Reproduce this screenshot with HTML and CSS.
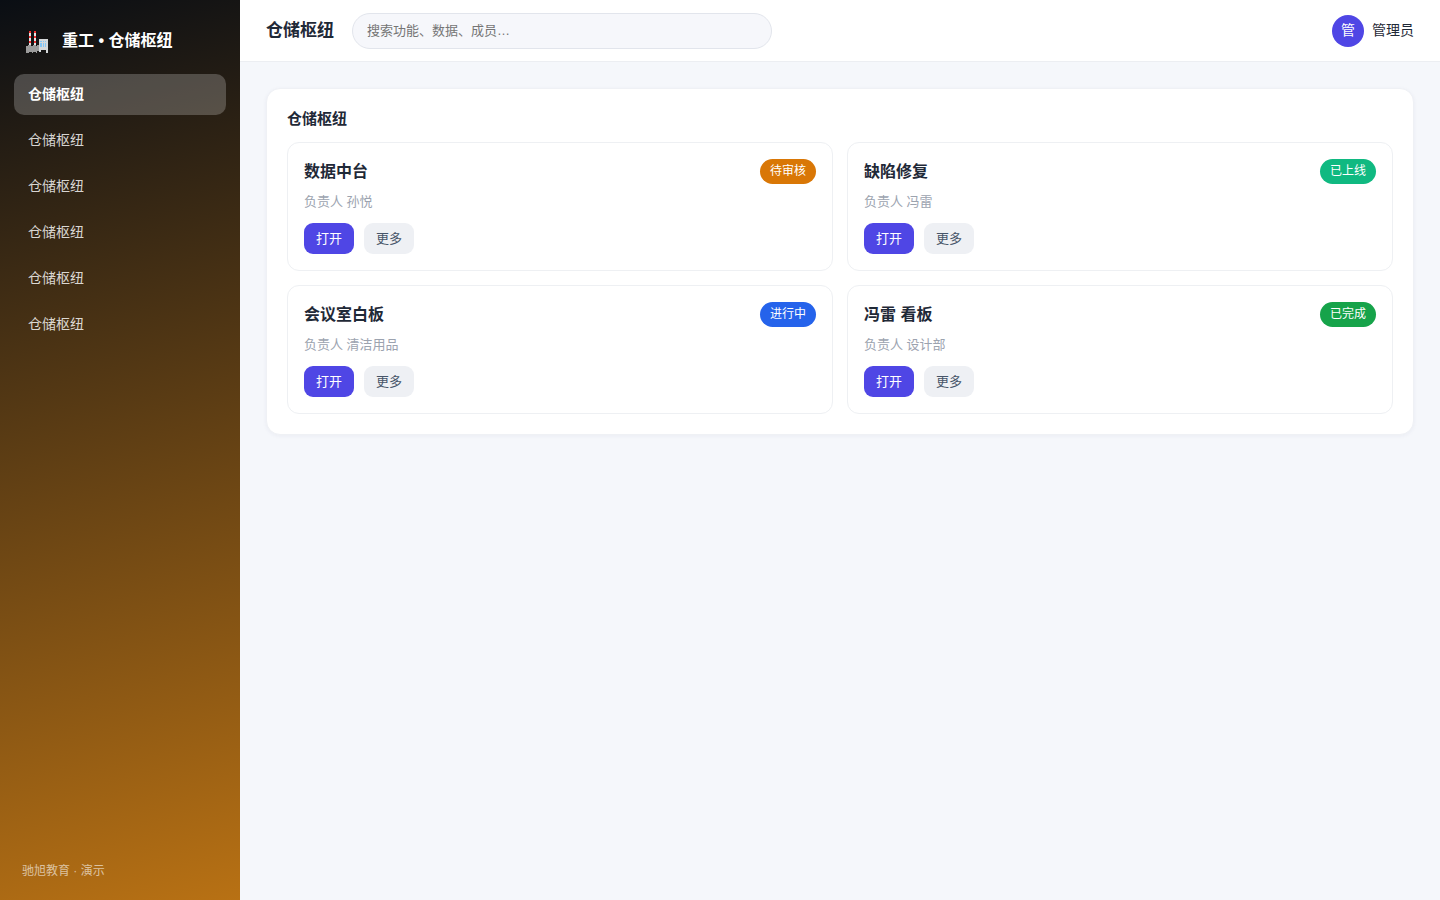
FILE: index.html
```html
<!DOCTYPE html>
<html lang="zh-CN">
<head>
    <meta charset="UTF-8">
    <meta name="viewport" content="width=device-width, initial-scale=1.0">
    <title>重工 • 仓储枢纽</title>
    <link rel="stylesheet" href="styles.css">
</head>
<body>
    <div class="app">
        <aside class="sidebar">
            <div class="brand">
                <svg class="brand-icon" viewBox="0 -4 22 26" shape-rendering="crispEdges" aria-hidden="true">
                    <path fill="#e4e4e4" d="M3 0h2v15H3zM8 0h2v15H8z"/>
                    <path fill="#f03030" d="M3 0h2v2H3zM3 5h2v2H3zM3 10h2v2H3zM8 0h2v2H8zM8 5h2v2H8zM8 10h2v2H8z"/>
                    <path fill="#9b9b9b" d="M0 15h2v-1h3v1h2v-1h3v1h1v-1h2v6h-2v2h-1v-1H7v1H6v-1H3v1H0z"/>
                    <path fill="#d5d8da" d="M13 8h9v14h-2v-3h-5v2h-2z"/>
                    <path fill="#83c5f5" d="M14 10h2v1h-2zM17 10h1v1h-1zM19 10h1v1h-1zM14 12h2v4h-2zM17 12h1v4h-1zM19 12h1v4h-1z"/>
                </svg>
                <span>重工 • 仓储枢纽</span>
            </div>
            <nav class="menu">
                <a class="menu-item active" href="#">仓储枢纽</a>
                <a class="menu-item" href="#">仓储枢纽</a>
                <a class="menu-item" href="#">仓储枢纽</a>
                <a class="menu-item" href="#">仓储枢纽</a>
                <a class="menu-item" href="#">仓储枢纽</a>
                <a class="menu-item" href="#">仓储枢纽</a>
            </nav>
            <div class="sidebar-footer">驰旭教育 · 演示</div>
        </aside>

        <div class="main">
            <header class="topbar">
                <h1>仓储枢纽</h1>
                <input class="search" type="search" placeholder="搜索功能、数据、成员…" aria-label="搜索">
                <div class="user">
                    <span class="avatar">管</span>
                    <span>管理员</span>
                </div>
            </header>

            <main class="content">
                <section class="panel">
                    <h2>仓储枢纽</h2>
                    <div class="cards">
                        <article class="card">
                            <div class="card-head">
                                <h3>数据中台</h3>
                                <span class="badge pending">待审核</span>
                            </div>
                            <p class="owner">负责人 孙悦</p>
                            <div class="actions">
                                <button class="btn primary" type="button">打开</button>
                                <button class="btn" type="button">更多</button>
                            </div>
                        </article>
                        <article class="card">
                            <div class="card-head">
                                <h3>缺陷修复</h3>
                                <span class="badge online">已上线</span>
                            </div>
                            <p class="owner">负责人 冯雷</p>
                            <div class="actions">
                                <button class="btn primary" type="button">打开</button>
                                <button class="btn" type="button">更多</button>
                            </div>
                        </article>
                        <article class="card">
                            <div class="card-head">
                                <h3>会议室白板</h3>
                                <span class="badge running">进行中</span>
                            </div>
                            <p class="owner">负责人 清洁用品</p>
                            <div class="actions">
                                <button class="btn primary" type="button">打开</button>
                                <button class="btn" type="button">更多</button>
                            </div>
                        </article>
                        <article class="card">
                            <div class="card-head">
                                <h3>冯雷 看板</h3>
                                <span class="badge done">已完成</span>
                            </div>
                            <p class="owner">负责人 设计部</p>
                            <div class="actions">
                                <button class="btn primary" type="button">打开</button>
                                <button class="btn" type="button">更多</button>
                            </div>
                        </article>
                    </div>
                </section>
            </main>
        </div>
    </div>
</body>
</html>
```
FILE: styles.css
```css
* {
    box-sizing: border-box;
}
body {
    margin: 0;
    font-family: "Liberation Sans", "Noto Sans CJK SC", sans-serif;
    font-size: 14px;
    line-height: 21px;
    color: #1f2937;
    background-color: #f5f7fb;
}
h1, h2, h3, p {
    margin: 0;
}
.app {
    display: flex;
    min-height: 100vh;
}

/* Sidebar */
.sidebar {
    width: 240px;
    flex-shrink: 0;
    display: flex;
    flex-direction: column;
    padding: 20px 14px 18px;
    color: white;
    background: linear-gradient(165deg, #0a0e14, #b87114);
}
.brand {
    display: flex;
    align-items: center;
    gap: 14px;
    height: 40px;
    padding: 0 12px;
    margin-bottom: 14px;
    font-size: 16px;
    font-weight: bold;
}
.brand-icon {
    width: 22px;
    height: 26px;
}
.menu {
    display: flex;
    flex-direction: column;
    gap: 5px;
}
.menu-item {
    padding: 10px 14px;
    border-radius: 10px;
    color: rgba(255, 255, 255, 0.82);
    text-decoration: none;
}
.menu-item.active {
    background-color: rgba(255, 255, 255, 0.22);
    color: white;
    font-weight: bold;
}
.sidebar-footer {
    margin-top: auto;
    padding: 0 8px;
    font-size: 12px;
    color: rgba(255, 255, 255, 0.6);
}

/* Top bar */
.main {
    flex: 1;
    min-width: 0;
}
.topbar {
    display: flex;
    align-items: center;
    gap: 18px;
    height: 62px;
    padding: 0 26px;
    background-color: white;
    border-bottom: 1px solid #eceef2;
}
.topbar h1 {
    font-size: 17px;
}
.search {
    width: 420px;
    height: 36px;
    padding: 0 14px;
    border: 1px solid #e2e5ec;
    border-radius: 18px;
    background-color: #f6f7fb;
    font-family: inherit;
    font-size: 13px;
    outline: none;
}
.search::placeholder {
    color: #757575;
}
.user {
    display: flex;
    align-items: center;
    gap: 8px;
    margin-left: auto;
}
.avatar {
    display: flex;
    align-items: center;
    justify-content: center;
    width: 32px;
    height: 32px;
    border-radius: 50%;
    background-color: #4f46e5;
    color: white;
}

/* Content */
.content {
    padding: 26px;
}
.panel {
    padding: 20px;
    background-color: white;
    border: 1px solid #eff1f5;
    border-radius: 14px;
    box-shadow: 0 1px 4px rgba(30, 41, 90, 0.05);
}
.panel h2 {
    margin-bottom: 14px;
    font-size: 15px;
    line-height: 19px;
}
.cards {
    display: grid;
    grid-template-columns: repeat(2, 1fr);
    gap: 14px;
}
.card {
    padding: 16px;
    border: 1px solid #eef0f3;
    border-radius: 12px;
}
.card-head {
    display: flex;
    align-items: center;
    justify-content: space-between;
}
.card h3 {
    font-size: 16px;
}
.badge {
    padding: 2px 10px;
    border-radius: 13px;
    font-size: 12px;
    color: white;
}
.pending {
    background-color: #d97706;
}
.online {
    background-color: #10b981;
}
.running {
    background-color: #2563eb;
}
.done {
    background-color: #16a34a;
}
.owner {
    margin: 7px 0 11px;
    font-size: 13px;
    color: #9ca3af;
}
.actions {
    display: flex;
    gap: 10px;
}
.btn {
    padding: 5px 12px;
    border: none;
    border-radius: 9px;
    background-color: #eef0f4;
    color: #475569;
    font-family: inherit;
    font-size: 13px;
    line-height: 21px;
    cursor: pointer;
}
.btn.primary {
    background-color: #4f46e5;
    color: white;
}
```
